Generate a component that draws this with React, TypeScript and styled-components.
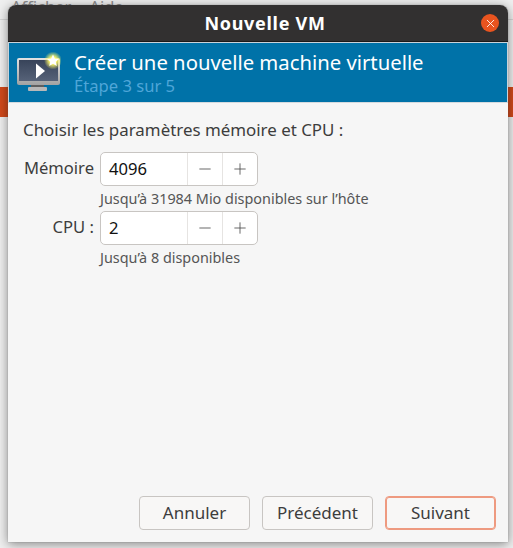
import React from "react"
import styled, { createGlobalStyle } from "styled-components"
import { Minus, Plus, X } from "lucide-react"

const GlobalStyle = createGlobalStyle`
  html, body {
    margin: 0;
    padding: 0;
    background: #efefef;
  }
  body {
    width: 513px;
    height: 548px;
    overflow: hidden;
    font-family: "Noto Sans", "Liberation Sans", sans-serif;
  }
`

const Screen = styled.div`
  position: relative;
  width: 513px;
  height: 548px;
  overflow: hidden;
  background: #efefef;
`

const MenuBehind = styled.div`
  display: flex;
  gap: 18px;
  height: 19px;
  padding-left: 11px;
  font-size: 16.5px;
  line-height: 13px;
  color: #8d8d8d;
  border-bottom: 1px solid #d6d6d6;
`

const BandBehind = styled.div`
  position: absolute;
  left: 0;
  top: 87px;
  width: 513px;
  height: 30px;
  background: #d0491b;
`

const Dialog = styled.div`
  position: absolute;
  left: 8px;
  top: 5px;
  width: 500px;
  height: 537px;
  display: flex;
  flex-direction: column;
  border-radius: 8px 8px 0 0;
  background: #f6f6f6;
  box-shadow: 0 0 1px #666666, 0 2px 11px rgba(0, 0, 0, 0.45);
  overflow: hidden;
`

const TitleBar = styled.div`
  position: relative;
  flex: none;
  height: 36px;
  padding-left: 14px;
  display: flex;
  align-items: center;
  justify-content: center;
  background: #323030;
  border-bottom: 1px solid #1c1a1a;
  color: #ffffff;
  font-size: 18px;
  font-weight: 700;
  letter-spacing: 0.7px;
`

const CloseButton = styled.div`
  position: absolute;
  right: 9px;
  top: 9px;
  width: 18px;
  height: 18px;
  display: flex;
  align-items: center;
  justify-content: center;
  border-radius: 50%;
  background: #e9541f;
  color: #ffffff;
`

const Banner = styled.div`
  flex: none;
  height: 61px;
  box-sizing: border-box;
  display: flex;
  align-items: center;
  gap: 13px;
  padding-left: 6px;
  background: #0072a8;
  border: 1px solid #c9d3da;
  border-bottom-color: #d5dade;
`

const BannerText = styled.div`
  display: flex;
  flex-direction: column;
`

const BannerTitle = styled.div`
  font-size: 20.3px;
  line-height: 26px;
  color: #ffffff;
`

const BannerStep = styled.div`
  font-size: 16.6px;
  line-height: 22px;
  color: #4fa6d8;
`

const Body = styled.div`
  flex: 1;
  display: flex;
  flex-direction: column;
  padding: 16px 12px 0 15px;
  color: #3d3d3d;
`

const Heading = styled.div`
  font-size: 16.9px;
  line-height: 22px;
  margin-bottom: 11px;
`

const FieldGrid = styled.div`
  display: grid;
  grid-template-columns: 71px 158px;
  column-gap: 6px;
  align-items: center;
`

const FieldLabel = styled.div`
  font-size: 16.6px;
  line-height: 22px;
  padding-bottom: 3px;
  text-align: right;
  white-space: nowrap;
`

const Spin = styled.div`
  display: flex;
  height: 34px;
  box-sizing: border-box;
  background: #ffffff;
  border: 1px solid #c8c5c2;
  border-radius: 5px;
`

const SpinValue = styled.div`
  flex: 1;
  padding-left: 8px;
  font-size: 16.6px;
  line-height: 31px;
  color: #111111;
`

const SpinButton = styled.div`
  width: 35px;
  box-sizing: border-box;
  display: flex;
  align-items: center;
  justify-content: center;
  border-left: 1px solid #e6e4e2;
  color: #4a4a4a;
`

const Hint = styled.div`
  width: 380px;
  margin: 3px 0;
  font-size: 14.4px;
  line-height: 19px;
  color: #555555;
`

const Footer = styled.div`
  margin-top: auto;
  display: flex;
  justify-content: flex-end;
  gap: 12px;
  padding-bottom: 12px;
`

const Button = styled.div<{ $focused?: boolean }>`
  width: 111px;
  height: 34px;
  box-sizing: border-box;
  padding-bottom: 2px;
  display: flex;
  align-items: center;
  justify-content: center;
  background: #f8f7f6;
  border: 1px solid ${p => (p.$focused ? "#ee9a80" : "#c8c5c2")};
  box-shadow: ${p => (p.$focused ? "0 0 0 1px #ee9a80 inset" : "none")};
  border-radius: 4px;
  font-size: 17px;
  color: #3d3d3d;
`

function NewVmIcon() {
  return (
    <svg width="46" height="46" viewBox="0 0 46 46">
      <defs>
        <radialGradient id="glow">
          <stop offset="0.4" stopColor="#fbf56a" />
          <stop offset="1" stopColor="#fbf56a" stopOpacity="0" />
        </radialGradient>
        <linearGradient id="screen" x1="0" y1="0" x2="0" y2="1">
          <stop offset="0" stopColor="#38445a" />
          <stop offset="1" stopColor="#566278" />
        </linearGradient>
        <linearGradient id="bezel" x1="0" y1="0" x2="0" y2="1">
          <stop offset="0" stopColor="#e2e2e2" />
          <stop offset="1" stopColor="#a2a2a2" />
        </linearGradient>
      </defs>
      <rect x="2" y="8" width="43" height="27" rx="2" fill="url(#bezel)" />
      <rect x="4" y="10" width="39" height="21" fill="url(#screen)" />
      <rect x="16" y="35" width="13" height="3" fill="#5f5f5f" />
      <rect x="13" y="37" width="19" height="4" rx="1" fill="#b8b8b8" />
      <path d="M21 13.5 L30 21 L21 28.5 Z" fill="#ffffff" />
      <circle cx="38" cy="10.5" r="9" fill="url(#glow)" />
      <path
        d="M38 4.5 L39.8 8.6 L44 9 L40.8 11.8 L41.8 16 L38 13.8 L34.2 16 L35.2 11.8 L32 9 L36.2 8.6 Z"
        fill="#ffffff"
      />
    </svg>
  )
}

function SpinField({ value }: { value: string }) {
  return (
    <Spin>
      <SpinValue>{value}</SpinValue>
      <SpinButton>
        <Minus size={18} strokeWidth={1.1} />
      </SpinButton>
      <SpinButton>
        <Plus size={18} strokeWidth={1.1} />
      </SpinButton>
    </Spin>
  )
}

export default function App() {
  return (
    <Screen>
      <GlobalStyle />
      <MenuBehind>
        <span>Afficher</span>
        <span>Aide</span>
      </MenuBehind>
      <BandBehind />
      <Dialog>
        <TitleBar>
          Nouvelle VM
          <CloseButton>
            <X size={13} strokeWidth={1.6} />
          </CloseButton>
        </TitleBar>
        <Banner>
          <NewVmIcon />
          <BannerText>
            <BannerTitle>Créer une nouvelle machine virtuelle</BannerTitle>
            <BannerStep>Étape 3 sur 5</BannerStep>
          </BannerText>
        </Banner>
        <Body>
          <Heading>Choisir les paramètres mémoire et CPU :</Heading>
          <FieldGrid>
            <FieldLabel>Mémoire</FieldLabel>
            <SpinField value="4096" />
            <span />
            <Hint>Jusqu’à 31984 Mio disponibles sur l’hôte</Hint>
            <FieldLabel>CPU :</FieldLabel>
            <SpinField value="2" />
            <span />
            <Hint>Jusqu’à 8 disponibles</Hint>
          </FieldGrid>
          <Footer>
            <Button>Annuler</Button>
            <Button>Précédent</Button>
            <Button $focused>Suivant</Button>
          </Footer>
        </Body>
      </Dialog>
    </Screen>
  )
}
